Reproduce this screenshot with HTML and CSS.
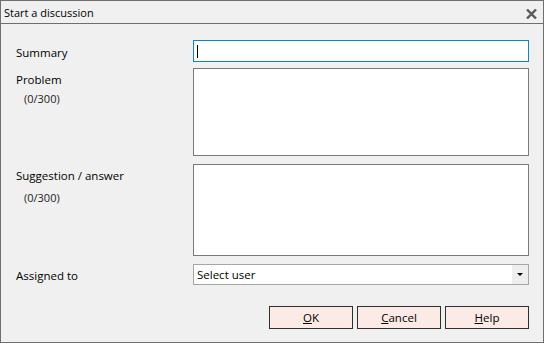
FILE: index.html
```html
<!DOCTYPE html>
<html lang="en">
<head>
  <meta charset="UTF-8" />
  <title>Start a discussion</title>
  <link rel="stylesheet" href="styles.css">
</head>
<body>
  <div class="dialog">
    <!-- title bar -->
    <div class="titlebar">
      <span class="title">Start a discussion</span>
      <svg class="close" width="11" height="10" viewBox="0 0 11 10">
        <path d="M1 0.5 L10 9.5 M10 0.5 L1 9.5" stroke="#5a5a5a" stroke-width="2.4" fill="none"/>
      </svg>
    </div>

    <!-- form -->
    <div class="form">
      <div class="row row-summary">
        <div class="label-col center"><span class="label label-low">Summary</span></div>
        <div class="field input focus"><span class="caret"></span></div>
      </div>
      <div class="row row-problem">
        <div class="label-col">
          <span class="label">Problem</span>
          <span class="count">(0/300)</span>
        </div>
        <div class="field textarea"></div>
      </div>
      <div class="row row-suggestion">
        <div class="label-col">
          <span class="label">Suggestion / answer</span>
          <span class="count count-far">(0/300)</span>
        </div>
        <div class="field textarea tall"></div>
      </div>
      <div class="row row-assigned">
        <div class="label-col center"><span class="label label-low">Assigned to</span></div>
        <div class="field select">
          <span class="select-text">Select user</span>
          <span class="select-btn"><span class="arrow"></span></span>
        </div>
      </div>
      <div class="buttons">
        <button class="btn"><u>O</u>K</button>
        <button class="btn"><u>C</u>ancel</button>
        <button class="btn"><u>H</u>elp</button>
      </div>
    </div>
  </div>
</body>
</html>
```

FILE: styles.css
```css
:root {
  --bg: #f0f0f0;
  --frame: #6f6f6f;
  --field-border: #7a7a7a;
  --focus: #1a7fc6;
  --btn-bg: #fbeae5;
  --btn-border: #2f2f2f;
}
html, body {
  margin: 0; padding: 0;
  background: var(--bg);
  font-family: 'Open Sans', 'Noto Sans', Arial, sans-serif;
  font-size: 11.5px;
  color: #000;
}
.dialog {
  width: 544px; height: 343px;
  box-sizing: border-box;
  border: 1px solid var(--frame);
  display: flex;
  flex-direction: column;
}
.titlebar {
  height: 22px;
  border-bottom: 1px solid var(--frame);
  display: flex;
  align-items: center;
  justify-content: space-between;
  padding: 0 6px 0 3px;
}
.title {
  font-size: 11px;
  margin-top: 1px;
}
.close { margin-top: 3px; }
.form {
  padding: 16px 14px 0 15px;
  display: flex;
  flex-direction: column;
}
.row {
  display: flex;
}
.label-col {
  width: 177px;
  display: flex;
  flex-direction: column;
  align-items: flex-start;
}
.label-col.center { justify-content: center; }
.label { line-height: 14px; }
.label-low { margin-top: 3px; }
.count {
  margin-left: 8px;
  margin-top: 5px;
  line-height: 14px;
  font-size: 11px;
  color: #222;
}
.count-far { margin-top: 8px; }
.field {
  flex: 1;
  background: #fff;
  border: 1px solid var(--field-border);
  box-sizing: border-box;
}
.input { height: 22px; display: flex; align-items: center; padding-left: 3px; }
.input.focus { border-color: var(--focus); }
.caret { width: 1px; height: 13px; background: #000; }
.row-problem { margin-top: 6px; }
.row-problem .label-col { padding-top: 5px; }
.textarea { height: 88px; }
.row-suggestion { margin-top: 8px; }
.row-suggestion .label-col { padding-top: 5px; }
.textarea.tall { height: 92px; }
.row-assigned { margin-top: 8px; }
.select {
  height: 21px;
  border-color: #a6a6a6;
  display: flex;
  align-items: center;
  justify-content: space-between;
}
.select-text { padding-left: 3px; }
.select-btn {
  width: 16px; height: 100%;
  background: #eeeeee;
  display: flex;
  align-items: center;
  justify-content: center;
}
.arrow {
  width: 0; height: 0;
  border-left: 3px solid transparent;
  border-right: 3px solid transparent;
  border-top: 3px solid #000;
}
.buttons {
  margin-top: 21px;
  display: flex;
  justify-content: flex-end;
  gap: 4px;
}
.btn {
  width: 84px; height: 23px;
  background: var(--btn-bg);
  border: 1px solid var(--btn-border);
  font-family: inherit;
  font-size: 11.5px;
  color: #000;
  padding: 0;
}
.btn u { text-underline-offset: 1px; }
```
